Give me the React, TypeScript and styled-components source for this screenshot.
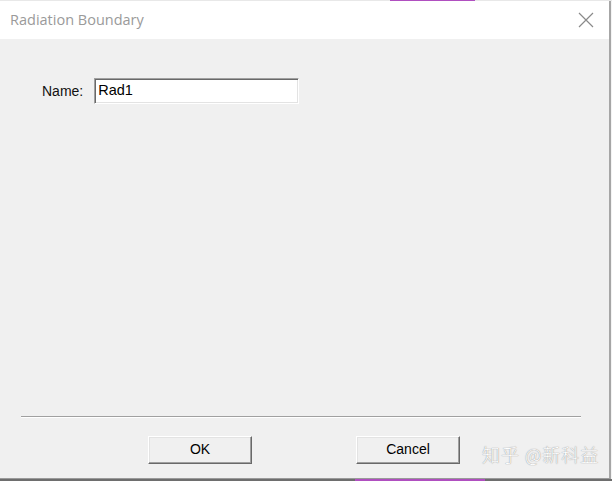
import styled, { createGlobalStyle } from "styled-components";

const GlobalStyle = createGlobalStyle`
  html, body {
    margin: 0;
    padding: 0;
    background: #f0f0f0;
  }
  * {
    box-sizing: border-box;
  }
`;

const App = () => {
  return (
    <Page>
      <GlobalStyle />
      <EdgeStrip>
        <Accent $left={390} $width={85} />
      </EdgeStrip>
      <Window>
        <TitleBar>
          <Title>Radiation Boundary</Title>
          <CloseButton>
            <svg width="16" height="16" viewBox="0 0 16 16">
              <path d="M1 1 L15 15 M15 1 L1 15" stroke="#8a8a8a" strokeWidth="1.2" fill="none" />
            </svg>
          </CloseButton>
        </TitleBar>
        <Body>
          <FieldRow>
            <Label>Name:</Label>
            <TextBox defaultValue="Rad1" />
          </FieldRow>
          <Spacer />
          <Separator />
          <ButtonRow>
            <DialogButton>OK</DialogButton>
            <DialogButton>Cancel</DialogButton>
          </ButtonRow>
          <Watermark>知乎 @新科益</Watermark>
        </Body>
      </Window>
      <BottomStrip>
        <Accent $left={355} $width={130} />
      </BottomStrip>
    </Page>
  );
};

const Page = styled.div`
  width: 612px;
  height: 481px;
  display: flex;
  flex-direction: column;
  overflow: hidden;
  background: #f4f4f4;
`;

const EdgeStrip = styled.div`
  height: 1px;
  display: flex;
  background: #e8e8e8;
`;

const BottomStrip = styled.div`
  height: 2px;
  display: flex;
  background: #6e6e6e;
`;

const Accent = styled.div<{ $left: number; $width: number }>`
  margin-left: ${(p) => p.$left}px;
  width: ${(p) => p.$width}px;
  background: #b04fc0;
`;

const Window = styled.div`
  width: 611px;
  height: 478px;
  display: flex;
  flex-direction: column;
  background: #f0f0f0;
  border-right: 2px solid #a6a6a6;
  border-bottom: 1px solid #9a9a9a;
`;

const TitleBar = styled.div`
  height: 38px;
  flex-shrink: 0;
  background: #fff;
  display: flex;
  align-items: center;
  justify-content: space-between;
  padding: 0 15px 1px 10px;
`;

const Title = styled.span`
  font-family: "Open Sans", "Noto Sans", sans-serif;
  font-size: 14.5px;
  color: #9a9a9a;
`;

const CloseButton = styled.div`
  display: flex;
  width: 16px;
  height: 16px;
`;

const Body = styled.div`
  position: relative;
  flex: 1;
  display: flex;
  flex-direction: column;
  padding: 39px 0 14px;
  font-family: "Liberation Sans", Arial, sans-serif;
  color: #000;
`;

const FieldRow = styled.div`
  display: flex;
  align-items: center;
  padding-left: 42px;
  gap: 11px;
`;

const Label = styled.label`
  font-size: 14px;
  color: #111;
`;

const TextBox = styled.input`
  width: 205px;
  height: 26px;
  padding: 0 3px 3px;
  margin: 0;
  font-family: "Liberation Sans", Arial, sans-serif;
  font-size: 14.5px;
  color: #000;
  background: #fff;
  border-style: solid;
  border-width: 1px;
  border-color: #a0a0a0 #ffffff #ffffff #a0a0a0;
  box-shadow: inset 1px 1px 0 #696969, inset -1px -1px 0 #e3e3e3;
  outline: none;
`;

const Spacer = styled.div`
  flex: 1;
`;

const Separator = styled.div`
  margin: 0 28px 0 21px;
  height: 2px;
  border-top: 1px solid #a0a0a0;
  border-bottom: 1px solid #ffffff;
`;

const ButtonRow = styled.div`
  display: flex;
  gap: 104px;
  padding-left: 148px;
  margin-top: 18px;
`;

const DialogButton = styled.button`
  width: 104px;
  height: 28px;
  padding: 0 0 2px;
  margin: 0;
  font-family: "Liberation Sans", Arial, sans-serif;
  font-size: 14px;
  color: #000;
  background: #f0f0f0;
  border-style: solid;
  border-width: 1px;
  border-color: #ffffff #696969 #696969 #ffffff;
  box-shadow: inset -1px -1px 0 #a0a0a0, inset 1px 1px 0 #e3e3e3;
`;

const Watermark = styled.div`
  position: absolute;
  left: 482px;
  top: 402px;
  font-family: "Noto Sans CJK SC", sans-serif;
  font-weight: 300;
  font-size: 18px;
  letter-spacing: 1px;
  color: #ffffff;
  text-shadow: 0 0 1px rgba(90, 90, 90, 0.6), 0 0 1px rgba(90, 90, 90, 0.4);
  white-space: nowrap;
`;

export default App;
